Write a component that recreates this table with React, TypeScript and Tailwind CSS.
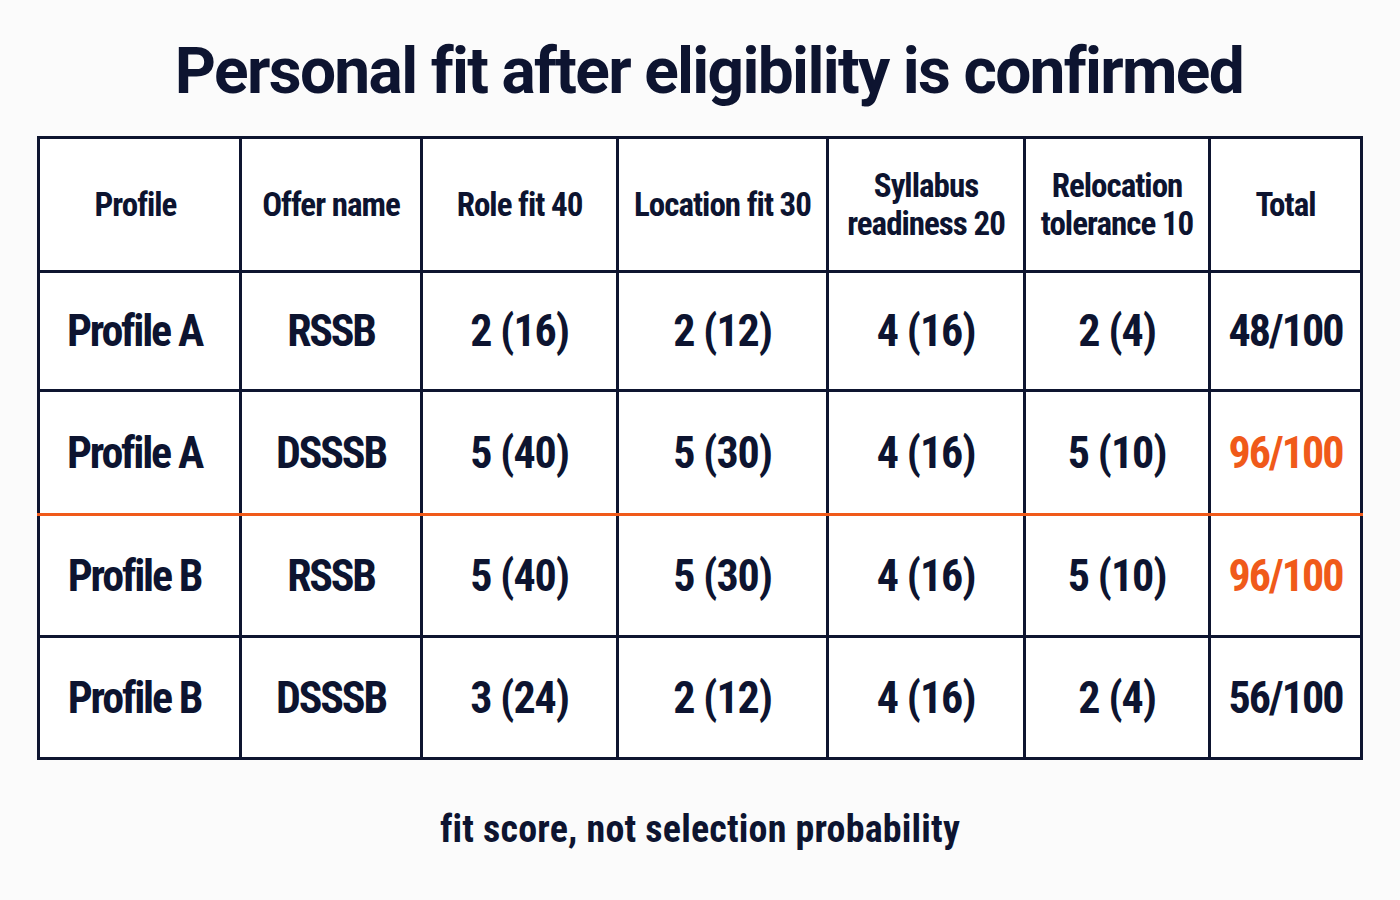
import React from "react";

interface FitRow {
  profile: string;
  offer: string;
  role: string;
  location: string;
  syllabus: string;
  relocation: string;
  total: string;
  highlight?: boolean;
}

const rows: FitRow[] = [
  { profile: "Profile A", offer: "RSSB", role: "2 (16)", location: "2 (12)", syllabus: "4 (16)", relocation: "2 (4)", total: "48/100" },
  { profile: "Profile A", offer: "DSSSB", role: "5 (40)", location: "5 (30)", syllabus: "4 (16)", relocation: "5 (10)", total: "96/100", highlight: true },
  { profile: "Profile B", offer: "RSSB", role: "5 (40)", location: "5 (30)", syllabus: "4 (16)", relocation: "5 (10)", total: "96/100", highlight: true },
  { profile: "Profile B", offer: "DSSSB", role: "3 (24)", location: "2 (12)", syllabus: "4 (16)", relocation: "2 (4)", total: "56/100" },
];

const rowHeights = ["h-[119px]", "h-[124px]", "h-[122px]", "h-[122px]"];

const cond = { fontFamily: "'Roboto Condensed', Roboto, 'Liberation Sans', sans-serif" };

export default function App() {
  return (
    <div className="w-[1400px] h-[900px] bg-[#fbfbfb] text-[#0d1430] flex flex-col items-center">
      <h1
        className="pt-[40px] ml-[18px] text-[64px] leading-none font-bold tracking-[-0.026em]"
        style={{ fontFamily: "Roboto, Inter, sans-serif" }}
      >
        Personal fit after eligibility is confirmed
      </h1>

      <table
        className="mt-[32px] w-[1323px] table-fixed border-collapse border-[3px] border-[#0e1530] bg-white"
        style={cond}
      >
        <colgroup>
          <col className="w-[202px]" />
          <col className="w-[181px]" />
          <col className="w-[196px]" />
          <col className="w-[210px]" />
          <col className="w-[197px]" />
          <col className="w-[185px]" />
          <col className="w-[152px]" />
        </colgroup>
        <thead>
          <tr className="h-[134px] text-[33px] leading-[38px] tracking-[-0.03em]">
            <th className="border-[3px] border-[#0e1530] font-bold pr-[8px]">Profile</th>
            <th className="border-[3px] border-[#0e1530] font-bold">Offer name</th>
            <th className="border-[3px] border-[#0e1530] font-bold">Role fit 40</th>
            <th className="border-[3px] border-[#0e1530] font-bold">Location fit 30</th>
            <th className="border-[3px] border-[#0e1530] font-bold">
              Syllabus
              <br />
              readiness 20
            </th>
            <th className="border-[3px] border-[#0e1530] font-bold">
              Relocation
              <br />
              tolerance 10
            </th>
            <th className="border-[3px] border-[#0e1530] font-bold">Total</th>
          </tr>
        </thead>
        <tbody>
          {rows.map((r, i) => {
            const cell =
              i === 1
                ? "border-[3px] border-[#0e1530] border-b-[#f05a1a] text-center"
                : "border-[3px] border-[#0e1530] text-center";
            return (
              <tr key={i} className={`${rowHeights[i]} text-[44px] font-bold tracking-tight`}>
                <td className={`${cell} pr-[10px] tracking-[-0.05em]`}>{r.profile}</td>
                <td className={`${cell} tracking-[-0.05em]`}>{r.offer}</td>
                <td className={cell}>{r.role}</td>
                <td className={cell}>{r.location}</td>
                <td className={cell}>{r.syllabus}</td>
                <td className={cell}>{r.relocation}</td>
                <td className={`${cell} tracking-[-0.045em] ${r.highlight ? "text-[#f05a1a]" : ""}`}>
                  {r.total}
                </td>
              </tr>
            );
          })}
        </tbody>
      </table>

      <p className="mt-[50px] text-[38px] leading-none font-bold tracking-[0.005em]" style={cond}>
        fit score, not selection probability
      </p>
    </div>
  );
}
